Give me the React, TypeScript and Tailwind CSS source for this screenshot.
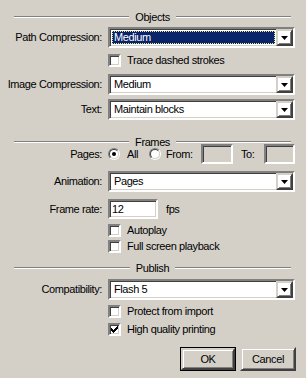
import React from 'react';

// classic 3d borders
const SUNKEN =
  'border-2 border-t-[#808080] border-l-[#808080] border-b-white border-r-white shadow-[inset_1px_1px_0_#404040,inset_-1px_-1px_0_#d4d0c8]';
const RAISED =
  'border-2 border-t-[#d4d0c8] border-l-[#d4d0c8] border-b-[#404040] border-r-[#404040] shadow-[inset_1px_1px_0_#ffffff,inset_-1px_-1px_0_#808080]';

// header is only as tall as its etched line; the title overflows around it
const GroupHeader = ({ title, className }: { title: string; className?: string }) => (
  <div className={`flex items-center h-[2px] pl-[14px] pr-[15px] ${className ?? ''}`}>
    <div className="flex-1 h-[2px] border-t border-t-[#808080] border-b border-b-white" />
    <span className="px-[6px] leading-[14px] whitespace-nowrap">{title}</span>
    <div className="flex-1 h-[2px] border-t border-t-[#808080] border-b border-b-white" />
  </div>
);

const Label = ({ children }: { children: React.ReactNode }) => (
  <div className="w-[102px] mr-[6px] text-right shrink-0 whitespace-nowrap">{children}</div>
);

const Arrow = () => (
  <div className={`w-[17px] h-[17px] ${RAISED} flex items-center justify-center shrink-0`}>
    <svg width="7" height="4" viewBox="0 0 7 4">
      <path d="M0 0h7L3.5 4z" fill="#000" />
    </svg>
  </div>
);

const Select = ({ value, focused }: { value: string; focused?: boolean }) => (
  <div className={`w-[187px] h-[21px] ${SUNKEN} bg-white flex items-center p-[2px] pr-[0px]`}>
    <div className="flex-1 h-full flex items-center pr-[1px]">
      {focused ? (
        <div className="w-full h-full bg-[#0a246a] text-white border border-dotted border-[#f0e68c] flex items-center pl-[1px] leading-none">
          {value}
        </div>
      ) : (
        <span className="pl-[2px] leading-none">{value}</span>
      )}
    </div>
    <Arrow />
  </div>
);

// Win2000 check pattern
const CHECK = ['......X', '.....XX', 'X...XXX', 'XX.XXX.', 'XXXXX..', '.XXX...', '..X....'];

const Checkbox = ({ label, checked }: { label: string; checked?: boolean }) => (
  <div className="flex items-center pl-[108px] h-[13px]">
    <div className={`w-[13px] h-[13px] ${SUNKEN} bg-white flex items-center justify-center shrink-0`}>
      {checked && (
        <svg width="7" height="7" viewBox="0 0 7 7" shapeRendering="crispEdges">
          {CHECK.flatMap((row, y) =>
            row.split('').map((c, x) => (c === 'X' ? <rect key={`${x}-${y}`} x={x} y={y} width="1" height="1" fill="#000" /> : null))
          )}
        </svg>
      )}
    </div>
    <span className="ml-[6px] leading-none">{label}</span>
  </div>
);

const Radio = ({ checked }: { checked?: boolean }) => (
  <div className="w-[12px] h-[12px] rounded-full border border-t-[#808080] border-l-[#808080] border-b-white border-r-white shrink-0">
    <div className="w-full h-full rounded-full border border-t-[#404040] border-l-[#404040] border-b-[#d4d0c8] border-r-[#d4d0c8] bg-white flex items-center justify-center">
      {checked && <div className="w-[4px] h-[4px] rounded-full bg-black" />}
    </div>
  </div>
);

const Button = ({ label, isDefault }: { label: string; isDefault?: boolean }) => (
  <div className={`w-[56px] h-[24px] ${isDefault ? 'border border-black' : ''}`}>
    <div className={`w-full h-full ${RAISED} flex items-center justify-center leading-none`}>{label}</div>
  </div>
);

export default function App() {
  return (
    <div
      className="w-[306px] h-[378px] bg-[#d4d0c8] text-black text-[11px] tracking-[-0.4px] overflow-hidden flex flex-col"
      style={{ fontFamily: '"Liberation Sans", Arial, sans-serif' }}
    >
      <GroupHeader title="Objects" className="mt-[16px]" />

      <div className="flex items-center mt-[9px]">
        <Label>Path Compression:</Label>
        <Select value="Medium" focused />
      </div>
      <div className="mt-[6px]">
        <Checkbox label="Trace dashed strokes" />
      </div>
      <div className="flex items-center mt-[7px]">
        <Label>Image Compression:</Label>
        <Select value="Medium" />
      </div>
      <div className="flex items-center mt-[4px]">
        <Label>Text:</Label>
        <Select value="Maintain blocks" />
      </div>

      <GroupHeader title="Frames" className="mt-[21px]" />

      <div className="flex items-center mt-[1px] h-[20px]">
        <Label>Pages:</Label>
        <Radio checked />
        <span className="ml-[7px] w-[22px] leading-none">All</span>
        <Radio />
        <span className="ml-[5px] w-[35px] leading-none">From:</span>
        <div className={`w-[32px] h-[20px] ${SUNKEN} bg-[#d4d0c8]`} />
        <span className="ml-[8px] w-[23px] leading-none">To:</span>
        <div className={`w-[31px] h-[20px] ${SUNKEN} bg-[#d4d0c8]`} />
      </div>
      <div className="flex items-center mt-[7px]">
        <Label>Animation:</Label>
        <Select value="Pages" />
      </div>
      <div className="flex items-center mt-[7px] h-[20px]">
        <Label>Frame rate:</Label>
        <div className={`w-[50px] h-[20px] ${SUNKEN} bg-white flex items-center pl-[2px] leading-none`}>12</div>
        <span className="ml-[8px] leading-none">fps</span>
      </div>
      <div className="mt-[5px]">
        <Checkbox label="Autoplay" />
      </div>
      <div className="mt-[3px]">
        <Checkbox label="Full screen playback" />
      </div>

      <GroupHeader title="Publish" className="mt-[14px]" />

      <div className="flex items-center mt-[10px]">
        <Label>Compatibility:</Label>
        <Select value="Flash 5" />
      </div>
      <div className="mt-[5px]">
        <Checkbox label="Protect from import" />
      </div>
      <div className="mt-[5px]">
        <Checkbox label="High quality printing" checked />
      </div>

      <div className="flex justify-end gap-[4px] pr-[10px] mt-[11px]">
        <Button label="OK" isDefault />
        <Button label="Cancel" />
      </div>
    </div>
  );
}
